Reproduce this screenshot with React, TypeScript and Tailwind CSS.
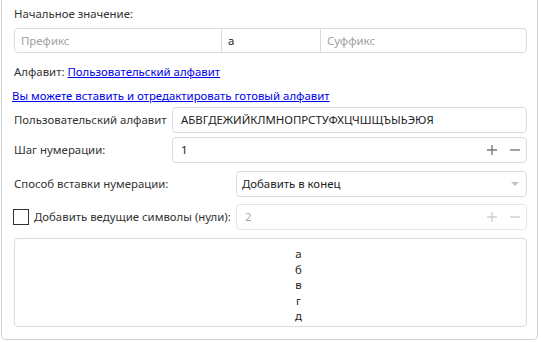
import React from "react";

const font = { fontFamily: '"Noto Sans", "Open Sans", sans-serif' };

function PlusMinus({ disabled }: { disabled?: boolean }) {
  const c = disabled ? "#d0d0d0" : "#7a7a7a";
  return (
    <div className="flex items-center gap-[11px] pr-[5px]">
      <svg width="12" height="12" viewBox="0 0 12 12">
        <path d="M6 1v10M1 6h10" stroke={c} strokeWidth="1.4" />
      </svg>
      <svg width="12" height="12" viewBox="0 0 12 12">
        <path d="M1 6h10" stroke={c} strokeWidth="1.4" />
      </svg>
    </div>
  );
}

export default function App() {
  return (
    <div className="w-[541px] h-[342px] bg-white overflow-hidden text-[11.4px] text-[#333] whitespace-nowrap" style={font}>
      <div className="ml-[1px] w-[537px] h-[340px] border-x border-b border-[#d2d2d2] rounded-b-[5px] pl-[12px] pr-[10px] flex flex-col">
        <div className="h-[28px] flex items-center">Начальное значение:</div>
        <div className="h-[25px] flex border border-[#dcdcdc] rounded-[4px]">
          <div className="w-[207px] flex items-center pl-[6px] text-[#a0a0a0] border-r border-[#dcdcdc]">Префикс</div>
          <div className="w-[99px] flex items-center pl-[6px] text-[#222] border-r border-[#dcdcdc]">а</div>
          <div className="flex-1 flex items-center pl-[6px] text-[#a0a0a0]">Суффикс</div>
        </div>
        <div className="mt-[9px] h-[20px] flex items-center">
          Алфавит:&nbsp;<span className="text-[#0000ee] underline">Пользовательский алфавит</span>
        </div>
        <div className="mt-[4px] h-[20px] flex items-center -ml-[2px] text-[#0000ee] underline">
          Вы можете вставить и отредактировать готовый алфавит
        </div>
        <div className="mt-[1px] h-[26px] flex items-center">
          <div className="w-[158px]">Пользовательский алфавит</div>
          <div className="flex-1 h-full border border-[#dcdcdc] rounded-[4px] flex items-center pl-[8px] text-[#222]">
            АБВГДЕЖИЙКЛМНОПРСТУФХЦЧШЩЪЫЬЭЮЯ
          </div>
        </div>
        <div className="mt-[4px] h-[26px] flex items-center">
          <div className="w-[158px]">Шаг нумерации:</div>
          <div className="flex-1 h-full border border-[#dcdcdc] rounded-[4px] flex items-center justify-between pl-[8px] text-[#222]">
            <span>1</span>
            <PlusMinus />
          </div>
        </div>
        <div className="mt-[8px] h-[26px] flex items-center">
          <div className="w-[222px]">Способ вставки нумерации:</div>
          <div className="flex-1 h-full border border-[#dcdcdc] rounded-[4px] flex items-center justify-between pl-[5px] pr-[6px] text-[#222]">
            <span>Добавить в конец</span>
            <svg width="10" height="6" viewBox="0 0 10 6">
              <path d="M1 1h8L5 5z" fill="#c4c4c4" />
            </svg>
          </div>
        </div>
        <div className="mt-[7px] h-[26px] flex items-center">
          <div className="w-[223px] flex items-center -ml-[1px]">
            <div className="w-[16px] h-[16px] border border-[#333] mr-[5px] shrink-0" />
            <span>Добавить ведущие символы (нули):</span>
          </div>
          <div className="flex-1 h-full border border-[#e6e6e6] rounded-[4px] flex items-center justify-between pl-[8px] text-[#aaa]">
            <span>2</span>
            <PlusMinus disabled />
          </div>
        </div>
        <div className="mt-[8px] h-[89px] border border-[#dcdcdc] rounded-[4px] flex flex-col items-center pl-[56px] pt-[7px] leading-[15.5px] text-[#222]">
          <span>а</span>
          <span>б</span>
          <span>в</span>
          <span>г</span>
          <span>д</span>
        </div>
      </div>
    </div>
  );
}
